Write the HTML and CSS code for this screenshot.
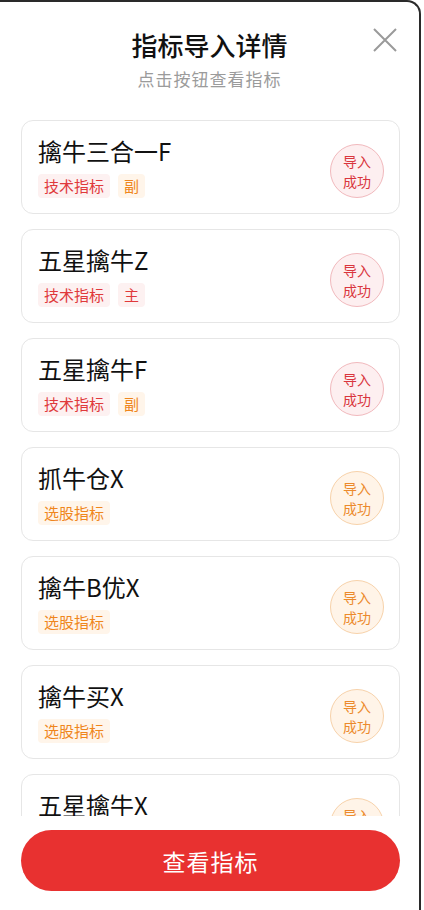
FILE: index.html
```html
<!DOCTYPE html>
<html lang="zh-CN">
<head>
    <meta charset="UTF-8">
    <meta name="viewport" content="width=device-width, initial-scale=1.0">
    <title>指标导入详情</title>
    <link rel="stylesheet" href="styles.css">
</head>
<body>

    <!-- 弹窗 -->
    <div class="sheet">
        <div class="sheet-header">
            <h1 class="sheet-title">指标导入详情</h1>
            <p class="sheet-sub">点击按钮查看指标</p>
        </div>

        <!-- 关闭按钮 -->
        <button class="sheet-close" aria-label="关闭">
            <svg width="24" height="24" viewBox="0 0 24 24">
                <path d="M1 1 L23 23 M23 1 L1 23" stroke="#9a9a9a" stroke-width="2" fill="none"/>
            </svg>
        </button>

        <!-- 指标列表 -->
        <div class="sheet-list">
            <div class="item">
                <div class="item-info">
                    <div class="item-name">擒牛三合一F</div>
                    <div class="item-tags">
                        <span class="tag tag-red">技术指标</span>
                        <span class="tag tag-orange">副</span>
                    </div>
                </div>
                <div class="badge badge-red">导入<br>成功</div>
            </div>

            <div class="item">
                <div class="item-info">
                    <div class="item-name">五星擒牛Z</div>
                    <div class="item-tags">
                        <span class="tag tag-red">技术指标</span>
                        <span class="tag tag-red">主</span>
                    </div>
                </div>
                <div class="badge badge-red">导入<br>成功</div>
            </div>

            <div class="item">
                <div class="item-info">
                    <div class="item-name">五星擒牛F</div>
                    <div class="item-tags">
                        <span class="tag tag-red">技术指标</span>
                        <span class="tag tag-orange">副</span>
                    </div>
                </div>
                <div class="badge badge-red">导入<br>成功</div>
            </div>

            <div class="item">
                <div class="item-info">
                    <div class="item-name">抓牛仓X</div>
                    <div class="item-tags">
                        <span class="tag tag-orange">选股指标</span>
                    </div>
                </div>
                <div class="badge badge-orange">导入<br>成功</div>
            </div>

            <div class="item">
                <div class="item-info">
                    <div class="item-name">擒牛B优X</div>
                    <div class="item-tags">
                        <span class="tag tag-orange">选股指标</span>
                    </div>
                </div>
                <div class="badge badge-orange">导入<br>成功</div>
            </div>

            <div class="item">
                <div class="item-info">
                    <div class="item-name">擒牛买X</div>
                    <div class="item-tags">
                        <span class="tag tag-orange">选股指标</span>
                    </div>
                </div>
                <div class="badge badge-orange">导入<br>成功</div>
            </div>

            <div class="item">
                <div class="item-info">
                    <div class="item-name">五星擒牛X</div>
                    <div class="item-tags">
                        <span class="tag tag-orange">选股指标</span>
                    </div>
                </div>
                <div class="badge badge-orange">导入<br>成功</div>
            </div>
        </div>

        <!-- 底部按钮 -->
        <div class="sheet-footer">
            <button class="btn-primary">查看指标</button>
        </div>
    </div>

</body>
</html>
```
FILE: styles.css
```css
/* 全局 */
body {
    margin: 0;
    background-color: #fff;
    font-family: "Noto Sans CJK SC", "Noto Sans", sans-serif;
    color: #111;
}

/* 弹窗 */
.sheet {
    position: relative;
    width: 421px;
    height: 910px;
    box-sizing: border-box;
    border-top: 2px solid #2a2a2a;
    border-right: 2px solid #2a2a2a;
    border-top-right-radius: 14px;
    background-color: #fff;
    display: flex;
    flex-direction: column;
}

.sheet-header {
    text-align: center;
    padding: 25px 0 29px;
}

.sheet-title {
    margin: 0;
    font-size: 26px;
    line-height: 36px;
    font-weight: 500;
    color: #111;
}

.sheet-sub {
    margin: 4px 0 0;
    font-size: 17px;
    line-height: 24px;
    color: #9b9b9b;
    letter-spacing: 1px;
}

.sheet-close {
    position: absolute;
    top: 26px;
    right: 22px;
    width: 24px;
    height: 24px;
    padding: 0;
    border: none;
    background: none;
    cursor: pointer;
}

.sheet-close svg {
    display: block;
}

/* 指标列表 */
.sheet-list {
    flex: 1;
    min-height: 0;
    overflow: hidden;
    padding: 0 19px 0 21px;
    display: flex;
    flex-direction: column;
    gap: 15px;
}

.item {
    flex: none;
    height: 94px;
    box-sizing: border-box;
    border: 1px solid #e6e6e6;
    border-radius: 12px;
    padding: 0 15px 0 16px;
    display: flex;
    align-items: center;
    justify-content: space-between;
}

.item-name {
    font-size: 24px;
    line-height: 30px;
    color: #111;
}

.item-tags {
    display: flex;
    gap: 8px;
    margin-top: 8px;
}

.tag {
    height: 24px;
    line-height: 24px;
    padding: 0 6px;
    border-radius: 4px;
    font-size: 15px;
}

.tag-red {
    color: #e0393b;
    background-color: #fdf1f1;
}

.tag-orange {
    color: #ef861c;
    background-color: #fff5ea;
}

/* 导入成功 */
.badge {
    width: 54px;
    height: 54px;
    box-sizing: border-box;
    border-radius: 50%;
    margin-top: 8px;
    display: flex;
    align-items: center;
    justify-content: center;
    text-align: center;
    font-size: 14px;
    line-height: 20px;
}

.badge-red {
    color: #d9363e;
    background-color: #fdeff0;
    border: 1px solid #f1b9bd;
}

.badge-orange {
    color: #ec8a2c;
    background-color: #fff4e8;
    border: 1px solid #f7d2aa;
}

/* 底部按钮 */
.sheet-footer {
    padding: 14px 19px 19px 21px;
}

.btn-primary {
    display: block;
    width: 100%;
    height: 61px;
    border: none;
    border-radius: 31px;
    background-color: #e83130;
    color: #fff;
    font-family: inherit;
    font-size: 23px;
    letter-spacing: 1px;
    cursor: pointer;
}
```
